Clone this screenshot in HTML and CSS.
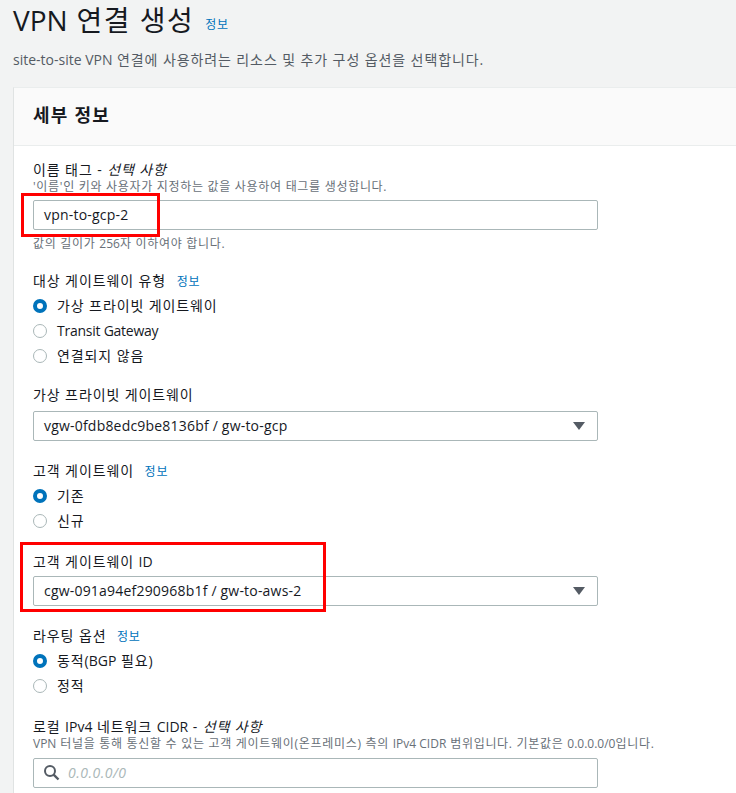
FILE: index.html
```html
<!DOCTYPE html>
<html lang="ko">
<head>
<meta charset="utf-8">
<title>VPN 연결 생성</title>
<link rel="stylesheet" href="styles.css">
</head>
<body>
<header class="page-head">
  <div class="title-row"><h1><span class="lat">VPN</span> 연결 생성</h1><a class="info info-title" href="#">정보</a></div>
  <p class="subtitle"><span class="lat">site-to-site VPN</span> 연결에 사용하려는 리소스 및 추가 구성 옵션을 선택합니다.</p>
</header>
<main class="panel">
  <div class="panel-head"><h2>세부 정보</h2></div>
  <div class="panel-body">
    <section class="field field-name">
      <div class="label">이름 태그 - <i>선택 사항</i></div>
      <div class="desc">'이름'인 키와 사용자가 지정하는 값을 사용하여 태그를 생성합니다.</div>
      <div class="control">vpn-to-gcp-2</div>
      <div class="hint">값의 길이가 <span class="lat">256</span>자 이하여야 합니다.</div>
      <span class="mark mark-name"></span>
    </section>
    <section class="field">
      <div class="label">대상 게이트웨이 유형 <a class="info" href="#">정보</a></div>
      <div class="radios">
        <div class="radio on"><span class="dot"></span><span>가상 프라이빗 게이트웨이</span></div>
        <div class="radio"><span class="dot"></span><span class="lat tight">Transit Gateway</span></div>
        <div class="radio"><span class="dot"></span><span>연결되지 않음</span></div>
      </div>
    </section>
    <section class="field">
      <div class="label">가상 프라이빗 게이트웨이</div>
      <div class="control select">vgw-0fdb8edc9be8136bf / gw-to-gcp<span class="caret"></span></div>
    </section>
    <section class="field">
      <div class="label">고객 게이트웨이 <a class="info" href="#">정보</a></div>
      <div class="radios radios-two">
        <div class="radio on"><span class="dot"></span><span>기존</span></div>
        <div class="radio"><span class="dot"></span><span>신규</span></div>
      </div>
    </section>
    <section class="field field-cgw">
      <div class="label label-short">고객 게이트웨이 <span class="lat">ID</span></div>
      <div class="control select">cgw-091a94ef290968b1f / gw-to-aws-2<span class="caret"></span></div>
      <span class="mark mark-cgw"></span>
    </section>
    <section class="field">
      <div class="label">라우팅 옵션 <a class="info" href="#">정보</a></div>
      <div class="radios radios-two">
        <div class="radio on"><span class="dot"></span><span>동적<span class="lat">(BGP</span> 필요<span class="lat">)</span></span></div>
        <div class="radio"><span class="dot"></span><span>정적</span></div>
      </div>
    </section>
    <section class="field">
      <div class="label">로컬 <span class="lat">IPv4</span> 네트워크 <span class="lat">CIDR</span> - <i>선택 사항</i></div>
      <div class="desc"><span class="lat">VPN</span> 터널을 통해 통신할 수 있는 고객 게이트웨이(온프레미스) 측의 <span class="lat">IPv4 CIDR</span> 범위입니다. 기본값은 <span class="lat">0.0.0.0/0</span>입니다.</div>
      <div class="control search">
        <svg class="search-icon" viewBox="0 0 16 16" width="16" height="16"><circle cx="6" cy="6" r="5" fill="none" stroke="#545b64" stroke-width="2"/><path d="M9.6 9.6L14.5 14.5" fill="none" stroke="#545b64" stroke-width="2.4"/></svg>
        <span class="placeholder">0.0.0.0/0</span>
      </div>
    </section>
  </div>
</main>
</body>
</html>
```
FILE: styles.css
```css
* { box-sizing: border-box; }
html, body { margin: 0; padding: 0; }
body {
  width: 736px;
  height: 793px;
  overflow: hidden;
  background: #f2f3f3;
  color: #16191f;
  font-family: "Open Sans", "Noto Sans CJK KR", sans-serif;
  font-size: 14px;
  line-height: 20px;
  letter-spacing: 0.9px;
}
.lat { letter-spacing: 0; }
.tight { letter-spacing: -0.25px; }
.page-head { padding: 0 0 0 13px; height: 87px; }
.title-row { display: flex; align-items: flex-start; height: 50px; }
h1 { margin: 0; font-size: 28px; line-height: 40px; font-weight: 400; letter-spacing: 1.5px; white-space: nowrap; }
.info { color: #0073bb; font-size: 12px; text-decoration: none; font-weight: 400; letter-spacing: 0.8px; }
.info-title { margin-left: 11px; line-height: 16px; margin-top: 17px; }
.subtitle { margin: 0; color: #545b64; line-height: 20px; white-space: nowrap; }
.panel { margin-left: 13px; background: #fff; border-left: 1px solid #e0e3e3; border-top: 1px solid #eaeded; height: 706px; }
.panel-head { height: 58px; background: #fafafa; border-bottom: 1px solid #eaeded; padding: 15px 19px; }
h2 { margin: 0; font-size: 18px; line-height: 24px; font-weight: 700; letter-spacing: 1.2px; }
.panel-body { padding: 14px 0 0 19px; width: 584px; display: flex; flex-direction: column; gap: 19px; }
.field { position: relative; }
.label { height: 20px; }
.label-short { height: 19px; margin-bottom: -1px; }
.label .info { margin-left: 6px; }
.desc, .hint { font-size: 12px; line-height: 16px; color: #687078; letter-spacing: 0.7px; white-space: nowrap; }
.desc { height: 14px; margin-top: -1px; }
.hint { margin-top: 6px; }
.control {
  height: 30px;
  margin-top: 7px;
  border: 1px solid #aab7b8;
  border-radius: 2px;
  background: #fff;
  padding: 0 10px;
  line-height: 28px;
  position: relative;
  letter-spacing: 0.2px;
}
.select { margin-top: 6px; margin-bottom: 1px; }
.caret {
  position: absolute;
  right: 12px;
  top: 10px;
  width: 0;
  height: 0;
  border-left: 6px solid transparent;
  border-right: 6px solid transparent;
  border-top: 8px solid #545b64;
}
.search { display: flex; align-items: center; gap: 8px; margin-top: 8px; }
.search-icon { flex: none; }
.placeholder { color: #aab7b8; font-style: italic; letter-spacing: 0.5px; }
.radios { margin-top: 5px; display: flex; flex-direction: column; gap: 5px; }
.radios-two { margin-bottom: 2px; }
.radio { display: flex; align-items: center; gap: 10px; height: 20px; }
.dot { width: 14px; height: 14px; border-radius: 50%; border: 1px solid #aab7b8; background: #fff; flex: none; }
.on .dot { border: 4px solid #0073bb; }
.mark { position: absolute; border: 3px solid #f00; }
.mark-name { left: -12px; top: 33px; width: 139px; height: 44px; }
.mark-cgw { left: -13px; top: -10px; width: 306px; height: 70px; }
```
